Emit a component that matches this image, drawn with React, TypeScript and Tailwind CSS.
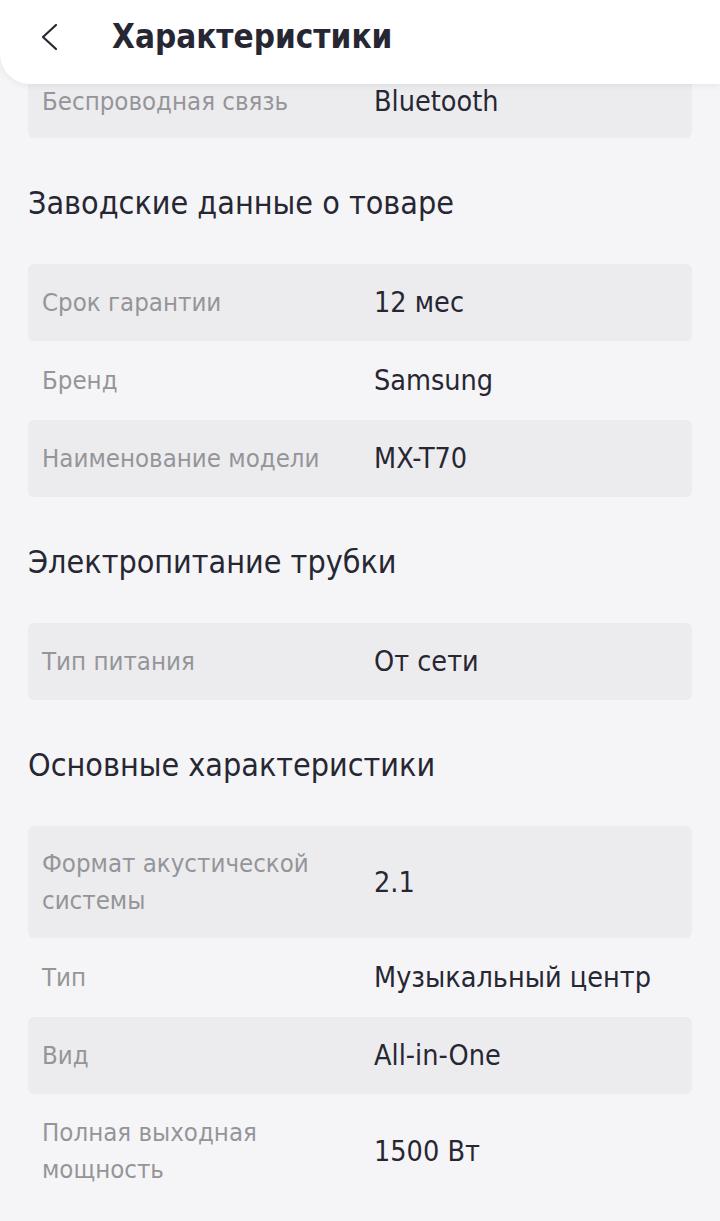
type Row = { label: string; value: string }

const sections: { title: string; rows: Row[] }[] = [
  { title: 'Заводские данные о товаре', rows: [
    { label: 'Срок гарантии', value: '12 мес' },
    { label: 'Бренд', value: 'Samsung' },
    { label: 'Наименование модели', value: 'MX-T70' },
  ] },
  { title: 'Электропитание трубки', rows: [{ label: 'Тип питания', value: 'От сети' }] },
  { title: 'Основные характеристики', rows: [
    { label: 'Формат акустической системы', value: '2.1' },
    { label: 'Тип', value: 'Музыкальный центр' },
    { label: 'Вид', value: 'All-in-One' },
    { label: 'Полная выходная мощность', value: '1500 Вт' },
  ] },
]

function SpecRow({ row, shaded }: { row: Row; shaded: boolean }) {
  return (
    <div className={`flex items-center min-h-[77px] px-[14px] py-[19px] rounded-md ${shaded ? 'bg-[#ececef]' : ''}`}>
      <div className="w-[332px] pr-4 text-[25.6px] leading-[37px] text-[#959599]">{row.label}</div>
      <div className="flex-1 text-[28.5px] leading-[37px] text-[#272733]">{row.value}</div>
    </div>
  )
}

export default function App() {
  return (
    <div className="min-h-[1221px] bg-[#f5f5f7] overflow-hidden" style={{ fontFamily: '"DejaVu Sans Condensed", "DejaVu Sans", sans-serif' }}>
      <div className="relative z-10 h-[84px] pb-[10px] bg-white rounded-bl-[30px] shadow-[0_2px_6px_rgba(0,0,0,0.06)] flex items-center">
        <svg className="ml-[38px]" width="22" height="30" viewBox="0 0 22 30" fill="none" stroke="#272733" strokeWidth="2.2" strokeLinecap="round" strokeLinejoin="round">
          <path d="M18 3 L5 15 L18 27" />
        </svg>
        <h1 className="ml-[52px] text-[33px] font-bold text-[#272733]">Характеристики</h1>
      </div>
      <div className="-mt-[24px] px-[28px]">
        <div className="h-[78px] rounded-md bg-[#ececef] flex items-end px-[14px] pb-[18px]">
          <div className="w-[332px] text-[25.6px] leading-[37px] text-[#959599]">Беспроводная связь</div>
          <div className="flex-1 text-[28.5px] leading-[37px] text-[#272733]">Bluetooth</div>
        </div>
        {sections.map((s) => (
          <div key={s.title}>
            <h2 className="pt-[45px] pb-[41px] text-[32px] leading-[40px] text-[#272733]">{s.title}</h2>
            <div className="flex flex-col gap-px">
              {s.rows.map((r, i) => <SpecRow key={r.label} row={r} shaded={i % 2 === 0} />)}
            </div>
          </div>
        ))}
      </div>
    </div>
  )
}
